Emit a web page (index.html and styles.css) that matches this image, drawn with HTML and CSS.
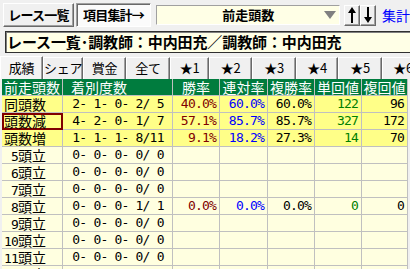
FILE: index.html
```html
<!DOCTYPE html>
<html lang="ja">
<head>
<meta charset="utf-8">
<link rel="stylesheet" href="styles.css">
</head>
<body>
<div class="toolbar">
  <button class="btn btn-list">レース一覧</button>
  <button class="btn btn-agg">項目集計→</button>
  <div class="combo"><span class="combo-text">前走頭数</span><svg class="combo-arrow" width="12" height="8" viewBox="0 0 12 8"><polygon points="0,0 12,0 6,8" fill="#808080"/></svg></div>
  <button class="arrow-btn"><svg width="10" height="16" viewBox="0 0 10 16"><rect x="4" y="4" width="2" height="12" fill="#000"/><polygon points="5,0 9,6 1,6" fill="#000"/></svg></button>
  <button class="arrow-btn"><svg width="10" height="16" viewBox="0 0 10 16"><rect x="4" y="0" width="2" height="12" fill="#000"/><polygon points="5,16 9,10 1,10" fill="#000"/></svg></button>
  <span class="link">集計</span>
</div>
<div class="title">レース一覧･調教師：中内田充／調教師：中内田充</div>
<div class="tabs">
  <div class="tab active w43">成績</div>
  <div class="tab w40">シェア</div>
  <div class="tab w43">賞金</div>
  <div class="tab w44">全て</div>
  <div class="tab w39">★1</div>
  <div class="tab w43">★2</div>
  <div class="tab w44">★3</div>
  <div class="tab w42">★4</div>
  <div class="tab w44">★5</div>
  <div class="tab w42">★6</div>
</div>
<div class="grid">
  <div class="row head">
    <div class="c first">前走頭数</div>
    <div class="c rec-h">着別度数</div>
    <div class="c ctr">勝率</div>
    <div class="c ctr">連対率</div>
    <div class="c ctr">複勝率</div>
    <div class="c ctr">単回値</div>
    <div class="c ctr">複回値</div>
  </div>
  <div class="row hl">
    <div class="c first">同頭数</div>
    <div class="c rec m">2- 1- 0- 2/ 5</div>
    <div class="c num m red">40.0%</div>
    <div class="c num m blue">60.0%</div>
    <div class="c num m">60.0%</div>
    <div class="c num m green">122</div>
    <div class="c num m">96</div>
  </div>
  <div class="row hl">
    <div class="c first sel">頭数減</div>
    <div class="c rec m">4- 2- 0- 1/ 7</div>
    <div class="c num m red">57.1%</div>
    <div class="c num m blue">85.7%</div>
    <div class="c num m">85.7%</div>
    <div class="c num m green">327</div>
    <div class="c num m">172</div>
  </div>
  <div class="row hl">
    <div class="c first">頭数増</div>
    <div class="c rec m">1- 1- 1- 8/11</div>
    <div class="c num m red">9.1%</div>
    <div class="c num m blue">18.2%</div>
    <div class="c num m">27.3%</div>
    <div class="c num m green">14</div>
    <div class="c num m">70</div>
  </div>
  <div class="row">
    <div class="c first"><span class="m"> 5</span>頭立</div>
    <div class="c rec m">0- 0- 0- 0/ 0</div>
    <div class="c"></div><div class="c"></div><div class="c"></div><div class="c"></div><div class="c"></div>
  </div>
  <div class="row">
    <div class="c first"><span class="m"> 6</span>頭立</div>
    <div class="c rec m">0- 0- 0- 0/ 0</div>
    <div class="c"></div><div class="c"></div><div class="c"></div><div class="c"></div><div class="c"></div>
  </div>
  <div class="row">
    <div class="c first"><span class="m"> 7</span>頭立</div>
    <div class="c rec m">0- 0- 0- 0/ 0</div>
    <div class="c"></div><div class="c"></div><div class="c"></div><div class="c"></div><div class="c"></div>
  </div>
  <div class="row">
    <div class="c first"><span class="m"> 8</span>頭立</div>
    <div class="c rec m">0- 0- 0- 1/ 1</div>
    <div class="c num m red">0.0%</div>
    <div class="c num m blue">0.0%</div>
    <div class="c num m">0.0%</div>
    <div class="c num m green">0</div>
    <div class="c num m">0</div>
  </div>
  <div class="row">
    <div class="c first"><span class="m"> 9</span>頭立</div>
    <div class="c rec m">0- 0- 0- 0/ 0</div>
    <div class="c"></div><div class="c"></div><div class="c"></div><div class="c"></div><div class="c"></div>
  </div>
  <div class="row">
    <div class="c first"><span class="m">10</span>頭立</div>
    <div class="c rec m">0- 0- 0- 0/ 0</div>
    <div class="c"></div><div class="c"></div><div class="c"></div><div class="c"></div><div class="c"></div>
  </div>
  <div class="row">
    <div class="c first"><span class="m">11</span>頭立</div>
    <div class="c rec m">0- 0- 0- 0/ 0</div>
    <div class="c"></div><div class="c"></div><div class="c"></div><div class="c"></div><div class="c"></div>
  </div>
  <div class="row">
    <div class="c first"><span class="m">12</span>頭立</div>
    <div class="c rec m">0- 0- 0- 0/ 0</div>
    <div class="c"></div><div class="c"></div><div class="c"></div><div class="c"></div><div class="c"></div>
  </div>
</div>
</body>
</html>
```
FILE: styles.css
```css
html, body {
  margin: 0;
  padding: 0;
}
body {
  width: 410px;
  height: 269px;
  overflow: hidden;
  background: #f0f0f0;
  font-family: "Noto Sans CJK JP", sans-serif;
  font-size: 14px;
  color: #000;
}

.toolbar {
  display: flex;
  align-items: center;
  height: 30px;
  padding-left: 3px;
  white-space: nowrap;
}
.btn {
  box-sizing: border-box;
  height: 24px;
  padding: 0;
  margin: 0;
  background: #f0f0f0;
  border: 1px solid;
  border-color: #ffffff #696969 #696969 #ffffff;
  box-shadow: inset -1px -1px 0 #a0a0a0;
  font-family: "Noto Sans CJK JP", sans-serif;
  font-weight: bold;
  font-size: 13px;
  letter-spacing: -0.8px;
  line-height: 20px;
  color: #000;
}
.btn-list { width: 72px; }
.btn-agg {
  width: 76px;
  margin-left: 2px;
  background: #fbfbfb;
  border-color: #a0a0a0 #ffffff #ffffff #a0a0a0;
  box-shadow: inset 1px 1px 0 #696969;
}
.combo {
  box-sizing: border-box;
  width: 187px;
  height: 20px;
  margin-left: 5px;
  background: #ffffe6;
  border: 1px solid;
  border-color: #a0a0a0 #ffffff #ffffff #a0a0a0;
  display: flex;
  align-items: center;
}
.combo-text {
  flex: 1;
  text-align: center;
  font-weight: bold;
  font-size: 13px;
  line-height: 18px;
}
.combo-arrow {
  margin-right: 3px;
  margin-left: -15px;
}
.arrow-btn {
  box-sizing: border-box;
  width: 16px;
  height: 21px;
  padding: 0;
  margin: 0;
  background: #f0f0f0;
  border: 1px solid;
  border-color: #ffffff #696969 #696969 #ffffff;
  box-shadow: inset -1px -1px 0 #a0a0a0;
  display: flex;
  align-items: center;
  justify-content: center;
}
.combo + .arrow-btn { margin-left: 4px; }
.link {
  margin-left: 6px;
  color: #0000ff;
  font-size: 14px;
  line-height: 20px;
}

.title {
  box-sizing: border-box;
  width: 420px;
  height: 22px;
  margin: 1px 0 0 5px;
  padding-left: 1px;
  background: #ffffe6;
  border: 1px solid #303030;
  box-shadow: inset 1px 1px 0 #808080;
  font-weight: bold;
  font-size: 15px;
  line-height: 19px;
  white-space: nowrap;
  letter-spacing: -0.1px;
}

.tabs {
  display: flex;
  height: 23px;
  margin-top: 3px;
  white-space: nowrap;
}
.tab {
  box-sizing: border-box;
  height: 22px;
  margin-top: 1px;
  flex: none;
  text-align: center;
  font-size: 13px;
  letter-spacing: -0.3px;
  line-height: 20px;
  background: #f0f0f0;
  border-top: 1px solid #ffffff;
  border-left: 1px solid #ffffff;
  border-right: 1px solid #696969;
  box-shadow: inset -1px 0 0 #a0a0a0;
}
.tab.active {
  height: 23px;
  margin-top: 0;
  background: #f4f4f4;
  line-height: 21px;
}
.w39 { width: 39px; }
.w40 { width: 40px; }
.w42 { width: 42px; }
.w43 { width: 43px; }
.w44 { width: 44px; }

.grid {
  margin-left: 2px;
  width: 406px;
}
.row {
  display: grid;
  grid-template-columns: 61px 110px 47px 48px 47px 47px 46px;
  height: 17px;
  background: #ffffe0;
}
.row.hl { background: #ffff88; }
.row.head {
  background: #007c3e;
  color: #ffffff;
}
.c {
  box-sizing: border-box;
  height: 17px;
  border-right: 1px solid #c0c0c0;
  border-bottom: 1px solid #c0c0c0;
  line-height: 16px;
  font-size: 14px;
  white-space: pre;
}
.first { padding-left: 2px; }
.first.sel {
  border: 2px solid #800000;
  padding-left: 0;
  line-height: 13px;
}
.rec-h { padding-left: 8px; }
.ctr { text-align: center; }
.rec { text-align: center; padding-left: 1px; }
.num { text-align: right; padding-right: 3px; }
.m {
  font-family: "DejaVu Sans Mono", monospace;
  font-size: 13px;
  letter-spacing: -0.8px;
}
.red { color: #800000; }
.blue { color: #0000ff; }
.green { color: #008000; }
```
